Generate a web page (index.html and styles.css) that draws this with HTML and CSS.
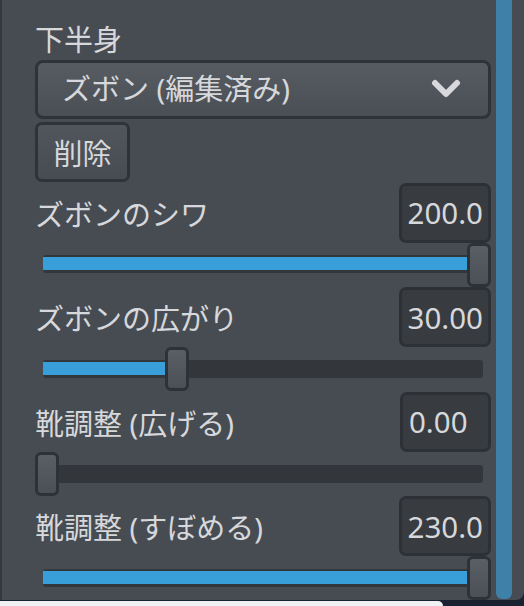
FILE: index.html
```html
<!DOCTYPE html>
<html lang="ja">
<head>
<meta charset="utf-8">
<link rel="stylesheet" href="styles.css">
</head>
<body>
<div class="panel">
  <div class="content">
    <div class="title">下半身</div>
    <div class="dropdown">
      <span class="dd-text">ズボン (編集済み)</span>
      <svg class="chev" width="30" height="20" viewBox="0 0 30 20"><path d="M4 4 L15 15 L26 4" fill="none" stroke="#d6d8dc" stroke-width="6" stroke-linecap="round" stroke-linejoin="round"/></svg>
    </div>
    <div class="btn-row"><div class="btn">削除</div></div>

    <div class="row">
      <div class="label">ズボンのシワ</div>
      <div class="value">200.0</div>
    </div>
    <div class="slider">
      <div class="track"><div class="fill" style="width:100%"></div></div>
      <div class="handle" style="left:432px"></div>
    </div>

    <div class="row">
      <div class="label">ズボンの広がり</div>
      <div class="value">30.00</div>
    </div>
    <div class="slider">
      <div class="track"><div class="fill" style="width:30%"></div></div>
      <div class="handle" style="left:130px"></div>
    </div>

    <div class="row">
      <div class="label">靴調整 (広げる)</div>
      <div class="value">0.00</div>
    </div>
    <div class="slider">
      <div class="track"><div class="fill" style="width:0%"></div></div>
      <div class="handle" style="left:0px"></div>
    </div>

    <div class="row">
      <div class="label">靴調整 (すぼめる)</div>
      <div class="value">230.0</div>
    </div>
    <div class="slider">
      <div class="track"><div class="fill" style="width:100%"></div></div>
      <div class="handle" style="left:432px"></div>
    </div>
  </div>
  <div class="scrollbar"></div>
</div>
<div class="bottom"><div class="bar"></div></div>
</body>
</html>
```
FILE: styles.css
```css
html, body {
  margin: 0;
  padding: 0;
}
body {
  width: 524px;
  height: 606px;
  overflow: hidden;
  background: #1a2131;
  font-family: "Noto Sans", "Noto Sans CJK JP", sans-serif;
  color: #d6d8db;
}
.panel {
  height: 600px;
  box-sizing: border-box;
  background: #474c53;
  border-left: 2px solid #34383d;
  border-bottom-right-radius: 8px;
  display: flex;
  overflow: hidden;
}
.content {
  width: 456px;
  margin-left: 33px;
  display: flex;
  flex-direction: column;
}
.title {
  margin-top: 22px;
  height: 36px;
  line-height: 36px;
  font-size: 29px;
}
.dropdown {
  margin-top: 2px;
  height: 59px;
  box-sizing: border-box;
  border: 3px solid #2f3338;
  border-radius: 8px;
  background: linear-gradient(#575c63, #4a4f56);
  display: flex;
  align-items: center;
  justify-content: space-between;
  padding: 0 27px 0 24px;
}
.dd-text {
  font-size: 29px;
  line-height: 36px;
}
.chev {
  display: block;
}
.btn-row {
  margin-top: 3px;
  display: flex;
}
.btn {
  width: 95px;
  height: 60px;
  box-sizing: border-box;
  border: 3px solid #2f3338;
  border-radius: 7px;
  background: linear-gradient(#51565d, #474c53);
  font-size: 29px;
  display: flex;
  align-items: center;
  justify-content: center;
}
.row {
  margin-top: 1px;
  height: 60px;
  display: flex;
  align-items: center;
  justify-content: space-between;
}
.label {
  font-size: 29px;
}
.value {
  min-width: 91px;
  height: 60px;
  box-sizing: border-box;
  border: 3px solid #2d3136;
  border-radius: 7px;
  background: #383c41;
  padding: 0 5px 0 6px;
  font-size: 29.5px;
  display: flex;
  align-items: center;
}
.slider {
  position: relative;
  height: 44px;
  display: flex;
  align-items: center;
}
.track {
  flex: 1;
  margin: 0 8px;
  height: 18px;
  box-sizing: border-box;
  padding: 2px 0 3px 0;
  background: #33373c;
  border-radius: 3px;
}
.fill {
  height: 100%;
  background: #389fda;
}
.handle {
  position: absolute;
  top: 0;
  width: 24px;
  height: 44px;
  box-sizing: border-box;
  border: 3px solid #2e3237;
  border-radius: 6px;
  background: linear-gradient(#5a5f66, #4b5056);
}
.scrollbar {
  margin-left: 5px;
  width: 16px;
  height: 599px;
  background: #3e80a8;
  border-bottom-left-radius: 6px;
  border-bottom-right-radius: 6px;
}
.bottom {
  height: 6px;
  display: flex;
  align-items: flex-end;
}
.bar {
  width: 443px;
  height: 5px;
  background: #f0f1f3;
  border-top-right-radius: 10px;
}
```
